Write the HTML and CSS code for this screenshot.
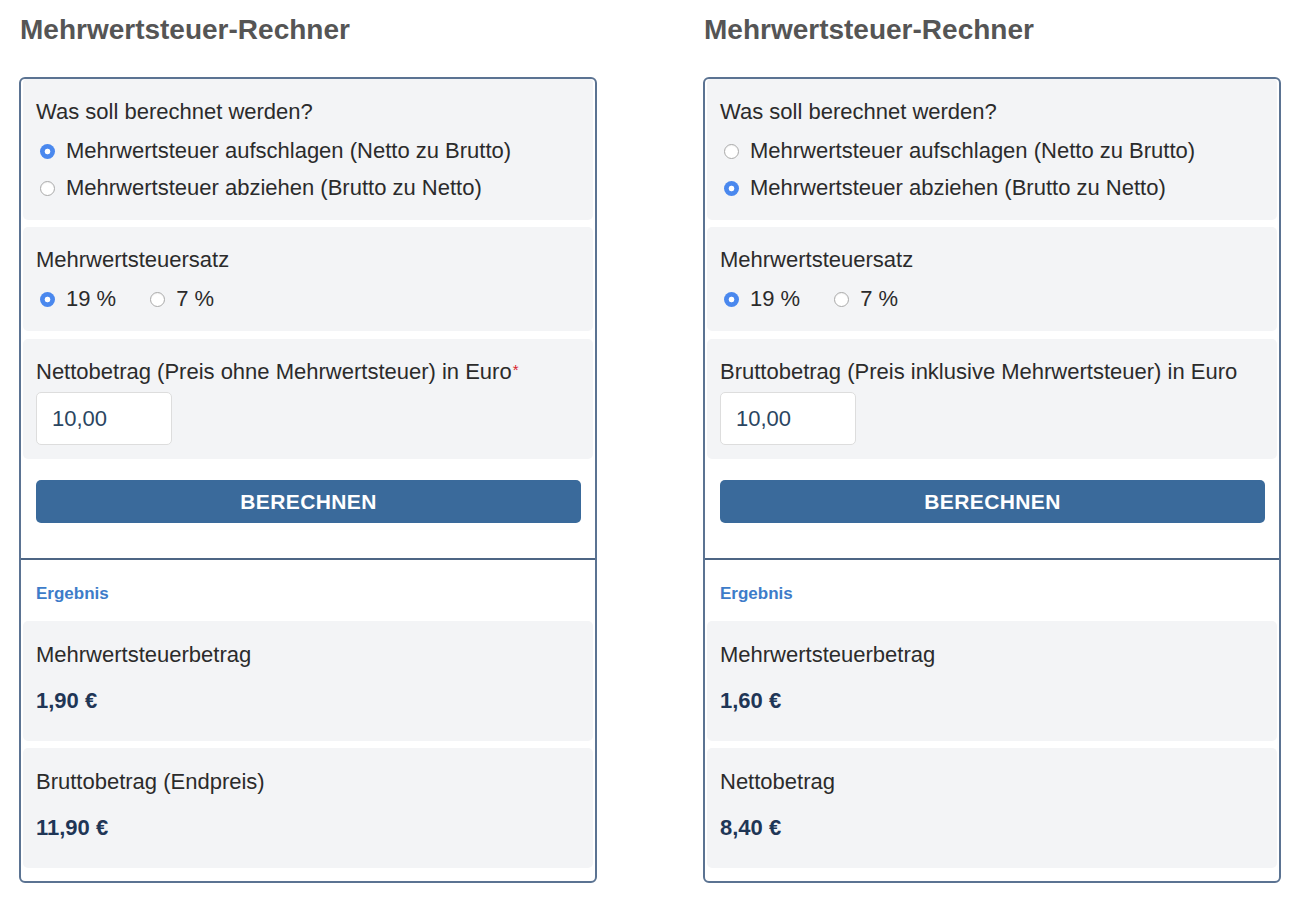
FILE: index.html
```html
<!DOCTYPE html>
<html lang="de">
<head>
<meta charset="utf-8">
<title>Mehrwertsteuer-Rechner</title>
<link rel="stylesheet" href="styles.css">
</head>
<body>
<div class="page">
  <div class="calc">
    <h2 class="title">Mehrwertsteuer-Rechner</h2>
    <div class="card">
      <div class="form">
        <div class="section s1">
          <div class="label">Was soll berechnet werden?</div>
          <label class="radio-row"><input type="radio" name="m1" checked><span>Mehrwertsteuer aufschlagen (Netto zu Brutto)</span></label>
          <label class="radio-row"><input type="radio" name="m1"><span>Mehrwertsteuer abziehen (Brutto zu Netto)</span></label>
        </div>
        <div class="section s2">
          <div class="label">Mehrwertsteuersatz</div>
          <div class="rates">
            <label class="radio-row"><input type="radio" name="r1" checked><span>19 %</span></label>
            <label class="radio-row"><input type="radio" name="r1"><span>7 %</span></label>
          </div>
        </div>
        <div class="section s3">
          <div class="label">Nettobetrag (Preis ohne Mehrwertsteuer) in Euro<span class="req">*</span></div>
          <input class="amount" type="text" value="10,00">
        </div>
        <button class="btn" type="button">BERECHNEN</button>
      </div>
      <div class="results">
        <div class="res-title">Ergebnis</div>
        <div class="section res">
          <div class="label">Mehrwertsteuerbetrag</div>
          <div class="value">1,90 €</div>
        </div>
        <div class="section res">
          <div class="label">Bruttobetrag (Endpreis)</div>
          <div class="value">11,90 €</div>
        </div>
      </div>
    </div>
  </div>

  <div class="calc">
    <h2 class="title">Mehrwertsteuer-Rechner</h2>
    <div class="card">
      <div class="form">
        <div class="section s1">
          <div class="label">Was soll berechnet werden?</div>
          <label class="radio-row"><input type="radio" name="m2"><span>Mehrwertsteuer aufschlagen (Netto zu Brutto)</span></label>
          <label class="radio-row"><input type="radio" name="m2" checked><span>Mehrwertsteuer abziehen (Brutto zu Netto)</span></label>
        </div>
        <div class="section s2">
          <div class="label">Mehrwertsteuersatz</div>
          <div class="rates">
            <label class="radio-row"><input type="radio" name="r2" checked><span>19 %</span></label>
            <label class="radio-row"><input type="radio" name="r2"><span>7 %</span></label>
          </div>
        </div>
        <div class="section s3">
          <div class="label">Bruttobetrag (Preis inklusive Mehrwertsteuer) in Euro</div>
          <input class="amount" type="text" value="10,00">
        </div>
        <button class="btn" type="button">BERECHNEN</button>
      </div>
      <div class="results">
        <div class="res-title">Ergebnis</div>
        <div class="section res">
          <div class="label">Mehrwertsteuerbetrag</div>
          <div class="value">1,60 €</div>
        </div>
        <div class="section res">
          <div class="label">Nettobetrag</div>
          <div class="value">8,40 €</div>
        </div>
      </div>
    </div>
  </div>
</div>
</body>
</html>
```

FILE: styles.css
```css
* { box-sizing: border-box; }

html, body {
  margin: 0;
  padding: 0;
  background: #ffffff;
}

body {
  font-family: "Liberation Sans", Arial, Helvetica, sans-serif;
  color: #2b2b2b;
}

.page {
  display: grid;
  grid-template-columns: 578px 578px;
  column-gap: 106px;
  padding: 14px 0 0 19px;
}

.title {
  margin: 0 0 31px 1px;
  font-size: 28px;
  line-height: 32px;
  font-weight: bold;
  color: #555555;
}

.card {
  border: 2px solid #5b7392;
  border-radius: 6px;
  overflow: hidden;
}

.form {
  padding: 0 2px 35px;
  display: flex;
  flex-direction: column;
}

.section {
  background: #f3f4f6;
  border-radius: 5px;
  padding: 21px 13px 14px;
}

.s1 { border-radius: 4px 4px 5px 5px; }
.s2 { margin-top: 7px; }
.s3 { margin-top: 8px; }

.label {
  font-size: 22px;
  line-height: 24px;
  margin-bottom: 8px;
  white-space: nowrap;
}

.req {
  color: #d8202b;
  font-size: 15px;
  vertical-align: top;
  margin-left: 1px;
  position: relative;
  top: -2px;
}

.radio-row {
  display: flex;
  align-items: center;
  height: 37px;
  font-size: 22px;
  white-space: nowrap;
}

.radio-row input {
  appearance: none;
  -webkit-appearance: none;
  width: 15px;
  height: 15px;
  margin: 2px 11px 0 4px;
  border: 1px solid #a9a9a9;
  border-radius: 50%;
  background: #ffffff;
  flex: none;
  box-shadow: inset 0 1px 1px rgba(0,0,0,0.05);
}

.radio-row input:checked {
  border: none;
  background: radial-gradient(circle, #ffffff 0, #ffffff 2.5px, #4a88ee 3.2px);
  box-shadow: none;
}

.rates {
  display: flex;
  gap: 30px;
}

.amount {
  display: block;
  width: 136px;
  height: 53px;
  border: 1px solid #dddddd;
  border-radius: 5px;
  background: #ffffff;
  padding: 0 15px;
  font-family: inherit;
  font-size: 22px;
  color: #2a4561;
  outline: none;
}

.btn {
  margin: 21px 12px 0 13px;
  height: 43px;
  border: none;
  border-radius: 5px;
  background: #3a6a9b;
  color: #ffffff;
  font-family: inherit;
  font-size: 21px;
  font-weight: bold;
  letter-spacing: 0.4px;
}

.results {
  border-top: 2px solid #4d6584;
  padding: 24px 2px 13px;
}

.res-title {
  font-size: 17px;
  line-height: 20px;
  font-weight: bold;
  color: #3d7cc9;
  padding-left: 13px;
  margin-bottom: 17px;
}

.res {
  padding: 22px 13px 27px;
}

.res + .res { margin-top: 7px; }

.res .label { margin-bottom: 0; }

.value {
  margin-top: 21px;
  font-size: 22px;
  line-height: 26px;
  font-weight: bold;
  color: #1f3656;
}
```
